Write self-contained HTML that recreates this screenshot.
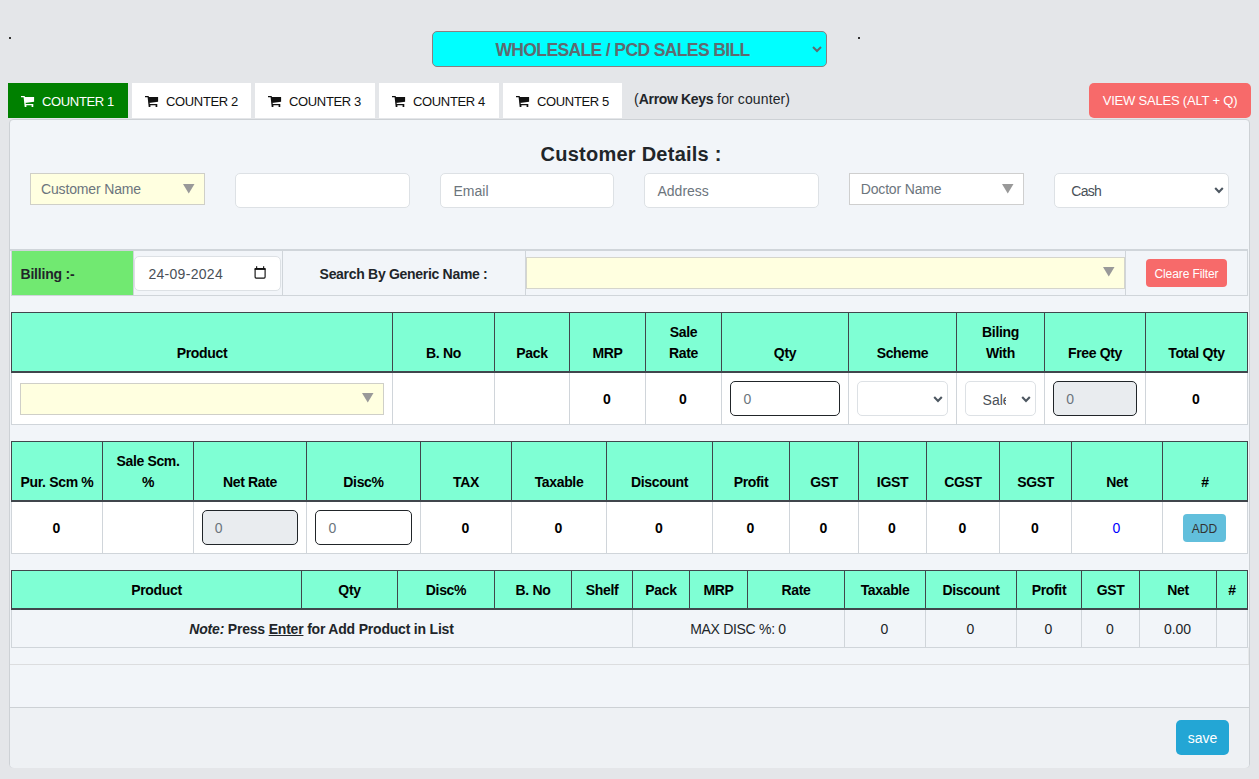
<!DOCTYPE html>
<html><head><meta charset="utf-8"><style>
html,body{margin:0;padding:0;}
body{width:1259px;height:779px;overflow:hidden;position:relative;background:#e4e6e9;font-family:"Liberation Sans", sans-serif;}
</style></head><body>
<div style="position:absolute;left:9px;top:37px;width:2px;height:2px;background:#333;"></div>
<div style="position:absolute;left:858px;top:37px;width:2px;height:2px;background:#333;"></div>
<div style="position:absolute;left:432px;top:31px;width:395px;height:36px;background:#00ffff;border:1px solid #8a7f80;border-radius:5px;box-sizing:border-box;"></div>
<div style="position:absolute;top:39.94px;height:20px;line-height:20px;font-size:17.5px;font-weight:bold;color:#5f6a70;white-space:nowrap;letter-spacing:-0.62px;left:432px;width:381px;text-align:center;">WHOLESALE / PCD SALES BILL</div>
<svg style="position:absolute;left:812px;top:46px;" width="10" height="7" viewBox="0 0 10 7"><path d="M1 1 L5 5 L9 1" fill="none" stroke="#5f6a70" stroke-width="2"/></svg>
<div style="position:absolute;left:8px;top:83px;width:120px;height:35px;background:#008000;"></div>
<svg style="position:absolute;left:20.7px;top:96px;" width="14" height="12" viewBox="0 0 14 12"><path d="M0 0 H3.3 V1.3 H0 Z M2.5 0.2 H3.9 L5.1 11 H3.7 Z M3.2 1 H13.1 V5.8 L3.9 6.9 Z M3.9 8.1 H12.3 V9.2 H3.9 Z M3.8 8.1 H5.4 V11 H3.8 Z M10.6 8.1 H12.3 V11 H10.6 Z" fill="#ffffff"/></svg>
<div style="position:absolute;top:91.50px;height:20px;line-height:20px;font-size:13px;font-weight:normal;color:#ffffff;white-space:nowrap;letter-spacing:-0.35px;left:42px;">COUNTER 1</div>
<div style="position:absolute;left:132px;top:83px;width:119px;height:35px;background:#ffffff;"></div>
<svg style="position:absolute;left:144.7px;top:96px;" width="14" height="12" viewBox="0 0 14 12"><path d="M0 0 H3.3 V1.3 H0 Z M2.5 0.2 H3.9 L5.1 11 H3.7 Z M3.2 1 H13.1 V5.8 L3.9 6.9 Z M3.9 8.1 H12.3 V9.2 H3.9 Z M3.8 8.1 H5.4 V11 H3.8 Z M10.6 8.1 H12.3 V11 H10.6 Z" fill="#111111"/></svg>
<div style="position:absolute;top:91.50px;height:20px;line-height:20px;font-size:13px;font-weight:normal;color:#111111;white-space:nowrap;letter-spacing:-0.35px;left:166px;">COUNTER 2</div>
<div style="position:absolute;left:255px;top:83px;width:120px;height:35px;background:#ffffff;"></div>
<svg style="position:absolute;left:267.7px;top:96px;" width="14" height="12" viewBox="0 0 14 12"><path d="M0 0 H3.3 V1.3 H0 Z M2.5 0.2 H3.9 L5.1 11 H3.7 Z M3.2 1 H13.1 V5.8 L3.9 6.9 Z M3.9 8.1 H12.3 V9.2 H3.9 Z M3.8 8.1 H5.4 V11 H3.8 Z M10.6 8.1 H12.3 V11 H10.6 Z" fill="#111111"/></svg>
<div style="position:absolute;top:91.50px;height:20px;line-height:20px;font-size:13px;font-weight:normal;color:#111111;white-space:nowrap;letter-spacing:-0.35px;left:289px;">COUNTER 3</div>
<div style="position:absolute;left:379px;top:83px;width:120px;height:35px;background:#ffffff;"></div>
<svg style="position:absolute;left:391.7px;top:96px;" width="14" height="12" viewBox="0 0 14 12"><path d="M0 0 H3.3 V1.3 H0 Z M2.5 0.2 H3.9 L5.1 11 H3.7 Z M3.2 1 H13.1 V5.8 L3.9 6.9 Z M3.9 8.1 H12.3 V9.2 H3.9 Z M3.8 8.1 H5.4 V11 H3.8 Z M10.6 8.1 H12.3 V11 H10.6 Z" fill="#111111"/></svg>
<div style="position:absolute;top:91.50px;height:20px;line-height:20px;font-size:13px;font-weight:normal;color:#111111;white-space:nowrap;letter-spacing:-0.35px;left:413px;">COUNTER 4</div>
<div style="position:absolute;left:503px;top:83px;width:119px;height:35px;background:#ffffff;"></div>
<svg style="position:absolute;left:515.7px;top:96px;" width="14" height="12" viewBox="0 0 14 12"><path d="M0 0 H3.3 V1.3 H0 Z M2.5 0.2 H3.9 L5.1 11 H3.7 Z M3.2 1 H13.1 V5.8 L3.9 6.9 Z M3.9 8.1 H12.3 V9.2 H3.9 Z M3.8 8.1 H5.4 V11 H3.8 Z M10.6 8.1 H12.3 V11 H10.6 Z" fill="#111111"/></svg>
<div style="position:absolute;top:91.50px;height:20px;line-height:20px;font-size:13px;font-weight:normal;color:#111111;white-space:nowrap;letter-spacing:-0.35px;left:537px;">COUNTER 5</div>
<div style="position:absolute;top:89.05px;height:20px;line-height:20px;font-size:14px;font-weight:normal;color:#212529;white-space:nowrap;letter-spacing:0.12px;left:634px;">(<b style="letter-spacing:-0.35px">Arrow Keys</b> for counter)</div>
<div style="position:absolute;left:1089px;top:83px;width:162px;height:35px;background:#f76a6a;border-radius:5px;"></div>
<div style="position:absolute;top:91.10px;height:20px;line-height:20px;font-size:13px;font-weight:normal;color:#ffffff;white-space:nowrap;letter-spacing:-0.2px;left:1089px;width:162px;text-align:center;">VIEW SALES (ALT + Q)</div>
<div style="position:absolute;left:9px;top:119px;width:1241px;height:649px;background:#f2f5f9;border:1px solid #cdd1d5;border-radius:4px;box-sizing:border-box;"></div>
<div style="position:absolute;left:10px;top:707px;width:1239px;height:60px;background:#eef1f4;border-top:1px solid #cdd1d5;border-radius:0 0 4px 4px;"></div>
<div style="position:absolute;top:143.77px;height:20px;line-height:20px;font-size:20px;font-weight:bold;color:#212529;white-space:nowrap;letter-spacing:0.25px;left:540.5px;">Customer Details :</div>
<div style="position:absolute;left:30px;top:173px;width:175px;height:32px;background:#ffffe0;border:1px solid #cfcfc8;box-sizing:border-box;"></div>
<div style="position:absolute;top:179.45px;height:20px;line-height:20px;font-size:14px;font-weight:normal;color:#6c757d;white-space:nowrap;letter-spacing:-0.15px;left:41px;">Customer Name</div>
<svg style="position:absolute;left:183px;top:184px;" width="12" height="10" viewBox="0 0 12 10"><path d="M0 0 H11.5 L5.75 9.6 Z" fill="#999"/></svg>
<div style="position:absolute;left:235px;top:173px;width:175px;height:35px;background:#fff;border:1px solid #dde1e5;border-radius:5px;box-sizing:border-box;"></div>
<div style="position:absolute;left:440px;top:173px;width:174px;height:35px;background:#fff;border:1px solid #dde1e5;border-radius:5px;box-sizing:border-box;"></div>
<div style="position:absolute;top:181.15px;height:20px;line-height:20px;font-size:14px;font-weight:normal;color:#6c757d;white-space:nowrap;left:453.5px;">Email</div>
<div style="position:absolute;left:644px;top:173px;width:175px;height:35px;background:#fff;border:1px solid #dde1e5;border-radius:5px;box-sizing:border-box;"></div>
<div style="position:absolute;top:181.15px;height:20px;line-height:20px;font-size:14px;font-weight:normal;color:#6c757d;white-space:nowrap;left:657.5px;">Address</div>
<div style="position:absolute;left:849px;top:173px;width:175px;height:32px;background:#fff;border:1px solid #cfcfcf;box-sizing:border-box;"></div>
<div style="position:absolute;top:179.15px;height:20px;line-height:20px;font-size:14px;font-weight:normal;color:#6c757d;white-space:nowrap;letter-spacing:-0.15px;left:860.7px;">Doctor Name</div>
<svg style="position:absolute;left:1002px;top:184px;" width="12" height="10" viewBox="0 0 12 10"><path d="M0 0 H11.5 L5.75 9.6 Z" fill="#999"/></svg>
<div style="position:absolute;left:1054px;top:173px;width:175px;height:35px;background:#fff;border:1px solid #dde1e5;border-radius:5px;box-sizing:border-box;"></div>
<div style="position:absolute;top:181.15px;height:20px;line-height:20px;font-size:14px;font-weight:normal;color:#495057;white-space:nowrap;letter-spacing:-0.7px;left:1071.3px;">Cash</div>
<svg style="position:absolute;left:1214px;top:186px;" width="10" height="8" viewBox="0 0 10 8"><path d="M1.2 2 L5 5.9 L8.8 2" fill="none" stroke="#4d5761" stroke-width="2.1"/></svg>
<div style="position:absolute;left:10px;top:249px;width:1238px;height:2px;background:#d0d5da;"></div>
<div style="position:absolute;left:11px;top:250px;width:1237px;height:46px;border-top:1px solid #d0d5da;border-bottom:1px solid #d0d5da;box-sizing:border-box;"></div>
<div style="position:absolute;left:11px;top:250px;width:1px;height:46px;background:#d0d5da;"></div>
<div style="position:absolute;left:133px;top:250px;width:1px;height:46px;background:#d0d5da;"></div>
<div style="position:absolute;left:282px;top:250px;width:1px;height:46px;background:#d0d5da;"></div>
<div style="position:absolute;left:525px;top:250px;width:1px;height:46px;background:#d0d5da;"></div>
<div style="position:absolute;left:1125px;top:250px;width:1px;height:46px;background:#d0d5da;"></div>
<div style="position:absolute;left:1247px;top:250px;width:1px;height:46px;background:#d0d5da;"></div>
<div style="position:absolute;left:12px;top:251px;width:121px;height:44px;background:#71e971;"></div>
<div style="position:absolute;top:264.15px;height:20px;line-height:20px;font-size:14px;font-weight:bold;color:#212529;white-space:nowrap;letter-spacing:-0.2px;left:20.5px;">Billing :-</div>
<div style="position:absolute;left:134px;top:256px;width:147px;height:35px;background:#fff;border:1px solid #dde1e5;border-radius:5px;box-sizing:border-box;"></div>
<div style="position:absolute;top:263.95px;height:20px;line-height:20px;font-size:14px;font-weight:normal;color:#495057;white-space:nowrap;letter-spacing:0.3px;left:148.4px;">24-09-2024</div>
<svg style="position:absolute;left:254px;top:266px;" width="12" height="13" viewBox="0 0 12 13"><rect x="1.1" y="2.6" width="10" height="9.5" rx="1" fill="none" stroke="#111" stroke-width="1.15"/><rect x="0.6" y="2.1" width="11" height="1.8" fill="#111"/><rect x="2.1" y="0.2" width="1.1" height="2.5" fill="#111"/><rect x="9.1" y="0.2" width="1.1" height="2.5" fill="#111"/></svg>
<div style="position:absolute;top:264.15px;height:20px;line-height:20px;font-size:14px;font-weight:bold;color:#212529;white-space:nowrap;letter-spacing:-0.3px;left:319.6px;">Search By Generic Name :</div>
<div style="position:absolute;left:526px;top:257px;width:599px;height:32px;background:#ffffe0;border:1px solid #d5d5cc;box-sizing:border-box;"></div>
<svg style="position:absolute;left:1103px;top:267px;" width="12" height="10" viewBox="0 0 12 10"><path d="M0 0 H11.5 L5.75 9.6 Z" fill="#999"/></svg>
<div style="position:absolute;left:1146px;top:259px;width:81px;height:28px;background:#f76a6a;border-radius:4px;"></div>
<div style="position:absolute;top:263.84px;height:20px;line-height:20px;font-size:12px;font-weight:normal;color:#ffffff;white-space:nowrap;letter-spacing:-0.1px;left:1146px;width:81px;text-align:center;">Cleare Filter</div>
<div style="position:absolute;left:11px;top:312px;width:1237px;height:59px;background:#7fffd4;"></div>
<div style="position:absolute;left:11px;top:373px;width:1237px;height:51px;background:#ffffff;"></div>
<div style="position:absolute;left:11px;top:312px;width:1237px;height:1px;background:#40464c;"></div>
<div style="position:absolute;left:11px;top:312px;width:1px;height:59px;background:#40464c;"></div>
<div style="position:absolute;left:392px;top:312px;width:1px;height:59px;background:#40464c;"></div>
<div style="position:absolute;left:494px;top:312px;width:1px;height:59px;background:#40464c;"></div>
<div style="position:absolute;left:569px;top:312px;width:1px;height:59px;background:#40464c;"></div>
<div style="position:absolute;left:645px;top:312px;width:1px;height:59px;background:#40464c;"></div>
<div style="position:absolute;left:721px;top:312px;width:1px;height:59px;background:#40464c;"></div>
<div style="position:absolute;left:848px;top:312px;width:1px;height:59px;background:#40464c;"></div>
<div style="position:absolute;left:956px;top:312px;width:1px;height:59px;background:#40464c;"></div>
<div style="position:absolute;left:1044px;top:312px;width:1px;height:59px;background:#40464c;"></div>
<div style="position:absolute;left:1145px;top:312px;width:1px;height:59px;background:#40464c;"></div>
<div style="position:absolute;left:1247px;top:312px;width:1px;height:59px;background:#40464c;"></div>
<div style="position:absolute;left:11px;top:371px;width:1237px;height:2px;background:#40464c;"></div>
<div style="position:absolute;left:11px;top:424px;width:1237px;height:1px;background:#d0d5da;"></div>
<div style="position:absolute;left:11px;top:373px;width:1px;height:51px;background:#d0d5da;"></div>
<div style="position:absolute;left:392px;top:373px;width:1px;height:51px;background:#d0d5da;"></div>
<div style="position:absolute;left:494px;top:373px;width:1px;height:51px;background:#d0d5da;"></div>
<div style="position:absolute;left:569px;top:373px;width:1px;height:51px;background:#d0d5da;"></div>
<div style="position:absolute;left:645px;top:373px;width:1px;height:51px;background:#d0d5da;"></div>
<div style="position:absolute;left:721px;top:373px;width:1px;height:51px;background:#d0d5da;"></div>
<div style="position:absolute;left:848px;top:373px;width:1px;height:51px;background:#d0d5da;"></div>
<div style="position:absolute;left:956px;top:373px;width:1px;height:51px;background:#d0d5da;"></div>
<div style="position:absolute;left:1044px;top:373px;width:1px;height:51px;background:#d0d5da;"></div>
<div style="position:absolute;left:1145px;top:373px;width:1px;height:51px;background:#d0d5da;"></div>
<div style="position:absolute;left:1247px;top:373px;width:1px;height:51px;background:#d0d5da;"></div>
<div style="position:absolute;top:343.45px;height:20px;line-height:20px;font-size:14px;font-weight:bold;color:#000000;white-space:nowrap;letter-spacing:-0.35px;left:12px;width:380px;text-align:center;">Product</div>
<div style="position:absolute;top:343.45px;height:20px;line-height:20px;font-size:14px;font-weight:bold;color:#000000;white-space:nowrap;letter-spacing:-0.35px;left:393px;width:101px;text-align:center;">B. No</div>
<div style="position:absolute;top:343.45px;height:20px;line-height:20px;font-size:14px;font-weight:bold;color:#000000;white-space:nowrap;letter-spacing:-0.35px;left:495px;width:74px;text-align:center;">Pack</div>
<div style="position:absolute;top:343.45px;height:20px;line-height:20px;font-size:14px;font-weight:bold;color:#000000;white-space:nowrap;letter-spacing:-0.35px;left:570px;width:75px;text-align:center;">MRP</div>
<div style="position:absolute;top:322.45px;height:20px;line-height:20px;font-size:14px;font-weight:bold;color:#000000;white-space:nowrap;letter-spacing:-0.35px;left:646px;width:75px;text-align:center;">Sale</div>
<div style="position:absolute;top:343.45px;height:20px;line-height:20px;font-size:14px;font-weight:bold;color:#000000;white-space:nowrap;letter-spacing:-0.35px;left:646px;width:75px;text-align:center;">Rate</div>
<div style="position:absolute;top:343.45px;height:20px;line-height:20px;font-size:14px;font-weight:bold;color:#000000;white-space:nowrap;letter-spacing:-0.35px;left:722px;width:126px;text-align:center;">Qty</div>
<div style="position:absolute;top:343.45px;height:20px;line-height:20px;font-size:14px;font-weight:bold;color:#000000;white-space:nowrap;letter-spacing:-0.35px;left:849px;width:107px;text-align:center;">Scheme</div>
<div style="position:absolute;top:322.45px;height:20px;line-height:20px;font-size:14px;font-weight:bold;color:#000000;white-space:nowrap;letter-spacing:-0.35px;left:957px;width:87px;text-align:center;">Biling</div>
<div style="position:absolute;top:343.45px;height:20px;line-height:20px;font-size:14px;font-weight:bold;color:#000000;white-space:nowrap;letter-spacing:-0.35px;left:957px;width:87px;text-align:center;">With</div>
<div style="position:absolute;top:343.45px;height:20px;line-height:20px;font-size:14px;font-weight:bold;color:#000000;white-space:nowrap;letter-spacing:-0.35px;left:1045px;width:100px;text-align:center;">Free Qty</div>
<div style="position:absolute;top:343.45px;height:20px;line-height:20px;font-size:14px;font-weight:bold;color:#000000;white-space:nowrap;letter-spacing:-0.35px;left:1146px;width:101px;text-align:center;">Total Qty</div>
<div style="position:absolute;left:20px;top:383px;width:364px;height:32px;background:#ffffe0;border:1px solid #cfcfc8;box-sizing:border-box;"></div>
<svg style="position:absolute;left:362px;top:393px;" width="12" height="10" viewBox="0 0 12 10"><path d="M0 0 H11.5 L5.75 9.6 Z" fill="#999"/></svg>
<div style="position:absolute;top:389.15px;height:20px;line-height:20px;font-size:14px;font-weight:bold;color:#000;white-space:nowrap;left:569px;width:76px;text-align:center;">0</div>
<div style="position:absolute;top:389.15px;height:20px;line-height:20px;font-size:14px;font-weight:bold;color:#000;white-space:nowrap;left:645px;width:76px;text-align:center;">0</div>
<div style="position:absolute;left:730px;top:381px;width:110px;height:35px;background:#fff;border:1.5px solid #212529;border-radius:5px;box-sizing:border-box;"></div>
<div style="position:absolute;top:388.95px;height:20px;line-height:20px;font-size:14px;font-weight:normal;color:#6c757d;white-space:nowrap;left:743.5px;">0</div>
<div style="position:absolute;left:857px;top:381px;width:91px;height:35px;background:#fff;border:1px solid #dde1e5;border-radius:5px;box-sizing:border-box;"></div>
<svg style="position:absolute;left:932.5px;top:395px;" width="10" height="8" viewBox="0 0 10 8"><path d="M1.2 2 L5 5.9 L8.8 2" fill="none" stroke="#4d5761" stroke-width="2.1"/></svg>
<div style="position:absolute;left:965px;top:381px;width:71px;height:35px;background:#fff;border:1px solid #dde1e5;border-radius:5px;box-sizing:border-box;"></div>
<div style="position:absolute;top:389.55px;height:20px;line-height:20px;font-size:14px;font-weight:normal;color:#495057;white-space:nowrap;left:982.6px;"><span style="display:inline-block;width:23px;overflow:hidden;vertical-align:top">Sale</span></div>
<svg style="position:absolute;left:1021px;top:395px;" width="10" height="8" viewBox="0 0 10 8"><path d="M1.2 2 L5 5.9 L8.8 2" fill="none" stroke="#4d5761" stroke-width="2.1"/></svg>
<div style="position:absolute;left:1053px;top:381px;width:84px;height:35px;background:#e9ecef;border:1.5px solid #212529;border-radius:5px;box-sizing:border-box;"></div>
<div style="position:absolute;top:388.95px;height:20px;line-height:20px;font-size:14px;font-weight:normal;color:#6c757d;white-space:nowrap;left:1066.3px;">0</div>
<div style="position:absolute;top:389.15px;height:20px;line-height:20px;font-size:14px;font-weight:bold;color:#000;white-space:nowrap;left:1145px;width:102px;text-align:center;">0</div>
<div style="position:absolute;left:11px;top:441px;width:1237px;height:59px;background:#7fffd4;"></div>
<div style="position:absolute;left:11px;top:502px;width:1237px;height:51px;background:#ffffff;"></div>
<div style="position:absolute;left:11px;top:441px;width:1237px;height:1px;background:#40464c;"></div>
<div style="position:absolute;left:11px;top:441px;width:1px;height:59px;background:#40464c;"></div>
<div style="position:absolute;left:102px;top:441px;width:1px;height:59px;background:#40464c;"></div>
<div style="position:absolute;left:193px;top:441px;width:1px;height:59px;background:#40464c;"></div>
<div style="position:absolute;left:306px;top:441px;width:1px;height:59px;background:#40464c;"></div>
<div style="position:absolute;left:420px;top:441px;width:1px;height:59px;background:#40464c;"></div>
<div style="position:absolute;left:511px;top:441px;width:1px;height:59px;background:#40464c;"></div>
<div style="position:absolute;left:606px;top:441px;width:1px;height:59px;background:#40464c;"></div>
<div style="position:absolute;left:712px;top:441px;width:1px;height:59px;background:#40464c;"></div>
<div style="position:absolute;left:789px;top:441px;width:1px;height:59px;background:#40464c;"></div>
<div style="position:absolute;left:858px;top:441px;width:1px;height:59px;background:#40464c;"></div>
<div style="position:absolute;left:926px;top:441px;width:1px;height:59px;background:#40464c;"></div>
<div style="position:absolute;left:999px;top:441px;width:1px;height:59px;background:#40464c;"></div>
<div style="position:absolute;left:1071px;top:441px;width:1px;height:59px;background:#40464c;"></div>
<div style="position:absolute;left:1162px;top:441px;width:1px;height:59px;background:#40464c;"></div>
<div style="position:absolute;left:1247px;top:441px;width:1px;height:59px;background:#40464c;"></div>
<div style="position:absolute;left:11px;top:500px;width:1237px;height:2px;background:#40464c;"></div>
<div style="position:absolute;left:11px;top:553px;width:1237px;height:1px;background:#d0d5da;"></div>
<div style="position:absolute;left:11px;top:502px;width:1px;height:51px;background:#d0d5da;"></div>
<div style="position:absolute;left:102px;top:502px;width:1px;height:51px;background:#d0d5da;"></div>
<div style="position:absolute;left:193px;top:502px;width:1px;height:51px;background:#d0d5da;"></div>
<div style="position:absolute;left:306px;top:502px;width:1px;height:51px;background:#d0d5da;"></div>
<div style="position:absolute;left:420px;top:502px;width:1px;height:51px;background:#d0d5da;"></div>
<div style="position:absolute;left:511px;top:502px;width:1px;height:51px;background:#d0d5da;"></div>
<div style="position:absolute;left:606px;top:502px;width:1px;height:51px;background:#d0d5da;"></div>
<div style="position:absolute;left:712px;top:502px;width:1px;height:51px;background:#d0d5da;"></div>
<div style="position:absolute;left:789px;top:502px;width:1px;height:51px;background:#d0d5da;"></div>
<div style="position:absolute;left:858px;top:502px;width:1px;height:51px;background:#d0d5da;"></div>
<div style="position:absolute;left:926px;top:502px;width:1px;height:51px;background:#d0d5da;"></div>
<div style="position:absolute;left:999px;top:502px;width:1px;height:51px;background:#d0d5da;"></div>
<div style="position:absolute;left:1071px;top:502px;width:1px;height:51px;background:#d0d5da;"></div>
<div style="position:absolute;left:1162px;top:502px;width:1px;height:51px;background:#d0d5da;"></div>
<div style="position:absolute;left:1247px;top:502px;width:1px;height:51px;background:#d0d5da;"></div>
<div style="position:absolute;top:471.65px;height:20px;line-height:20px;font-size:14px;font-weight:bold;color:#000000;white-space:nowrap;letter-spacing:-0.35px;left:12px;width:90px;text-align:center;">Pur. Scm %</div>
<div style="position:absolute;top:450.65px;height:20px;line-height:20px;font-size:14px;font-weight:bold;color:#000000;white-space:nowrap;letter-spacing:-0.35px;left:103px;width:90px;text-align:center;">Sale Scm.</div>
<div style="position:absolute;top:471.65px;height:20px;line-height:20px;font-size:14px;font-weight:bold;color:#000000;white-space:nowrap;letter-spacing:-0.35px;left:103px;width:90px;text-align:center;">%</div>
<div style="position:absolute;top:471.65px;height:20px;line-height:20px;font-size:14px;font-weight:bold;color:#000000;white-space:nowrap;letter-spacing:-0.35px;left:194px;width:112px;text-align:center;">Net Rate</div>
<div style="position:absolute;top:471.65px;height:20px;line-height:20px;font-size:14px;font-weight:bold;color:#000000;white-space:nowrap;letter-spacing:-0.35px;left:307px;width:113px;text-align:center;">Disc%</div>
<div style="position:absolute;top:471.65px;height:20px;line-height:20px;font-size:14px;font-weight:bold;color:#000000;white-space:nowrap;letter-spacing:-0.35px;left:421px;width:90px;text-align:center;">TAX</div>
<div style="position:absolute;top:471.65px;height:20px;line-height:20px;font-size:14px;font-weight:bold;color:#000000;white-space:nowrap;letter-spacing:-0.35px;left:512px;width:94px;text-align:center;">Taxable</div>
<div style="position:absolute;top:471.65px;height:20px;line-height:20px;font-size:14px;font-weight:bold;color:#000000;white-space:nowrap;letter-spacing:-0.35px;left:607px;width:105px;text-align:center;">Discount</div>
<div style="position:absolute;top:471.65px;height:20px;line-height:20px;font-size:14px;font-weight:bold;color:#000000;white-space:nowrap;letter-spacing:-0.35px;left:713px;width:76px;text-align:center;">Profit</div>
<div style="position:absolute;top:471.65px;height:20px;line-height:20px;font-size:14px;font-weight:bold;color:#000000;white-space:nowrap;letter-spacing:-0.35px;left:790px;width:68px;text-align:center;">GST</div>
<div style="position:absolute;top:471.65px;height:20px;line-height:20px;font-size:14px;font-weight:bold;color:#000000;white-space:nowrap;letter-spacing:-0.35px;left:859px;width:67px;text-align:center;">IGST</div>
<div style="position:absolute;top:471.65px;height:20px;line-height:20px;font-size:14px;font-weight:bold;color:#000000;white-space:nowrap;letter-spacing:-0.35px;left:927px;width:72px;text-align:center;">CGST</div>
<div style="position:absolute;top:471.65px;height:20px;line-height:20px;font-size:14px;font-weight:bold;color:#000000;white-space:nowrap;letter-spacing:-0.35px;left:1000px;width:71px;text-align:center;">SGST</div>
<div style="position:absolute;top:471.65px;height:20px;line-height:20px;font-size:14px;font-weight:bold;color:#000000;white-space:nowrap;letter-spacing:-0.35px;left:1072px;width:90px;text-align:center;">Net</div>
<div style="position:absolute;top:471.65px;height:20px;line-height:20px;font-size:14px;font-weight:bold;color:#000000;white-space:nowrap;letter-spacing:-0.35px;left:1163px;width:84px;text-align:center;">#</div>
<div style="position:absolute;top:517.95px;height:20px;line-height:20px;font-size:14px;font-weight:bold;color:#000;white-space:nowrap;left:11px;width:91px;text-align:center;">0</div>
<div style="position:absolute;left:202px;top:510px;width:96px;height:35px;background:#e9ecef;border:1.5px solid #212529;border-radius:5px;box-sizing:border-box;"></div>
<div style="position:absolute;top:517.85px;height:20px;line-height:20px;font-size:14px;font-weight:normal;color:#6c757d;white-space:nowrap;left:214.8px;">0</div>
<div style="position:absolute;left:315px;top:510px;width:97px;height:35px;background:#fff;border:1.5px solid #212529;border-radius:5px;box-sizing:border-box;"></div>
<div style="position:absolute;top:517.85px;height:20px;line-height:20px;font-size:14px;font-weight:normal;color:#6c757d;white-space:nowrap;left:328.6px;">0</div>
<div style="position:absolute;top:517.95px;height:20px;line-height:20px;font-size:14px;font-weight:bold;color:#000;white-space:nowrap;left:420px;width:91px;text-align:center;">0</div>
<div style="position:absolute;top:517.95px;height:20px;line-height:20px;font-size:14px;font-weight:bold;color:#000;white-space:nowrap;left:511px;width:95px;text-align:center;">0</div>
<div style="position:absolute;top:517.95px;height:20px;line-height:20px;font-size:14px;font-weight:bold;color:#000;white-space:nowrap;left:606px;width:106px;text-align:center;">0</div>
<div style="position:absolute;top:517.95px;height:20px;line-height:20px;font-size:14px;font-weight:bold;color:#000;white-space:nowrap;left:712px;width:77px;text-align:center;">0</div>
<div style="position:absolute;top:517.95px;height:20px;line-height:20px;font-size:14px;font-weight:bold;color:#000;white-space:nowrap;left:789px;width:69px;text-align:center;">0</div>
<div style="position:absolute;top:517.95px;height:20px;line-height:20px;font-size:14px;font-weight:bold;color:#000;white-space:nowrap;left:858px;width:68px;text-align:center;">0</div>
<div style="position:absolute;top:517.95px;height:20px;line-height:20px;font-size:14px;font-weight:bold;color:#000;white-space:nowrap;left:926px;width:73px;text-align:center;">0</div>
<div style="position:absolute;top:517.95px;height:20px;line-height:20px;font-size:14px;font-weight:bold;color:#000;white-space:nowrap;left:999px;width:72px;text-align:center;">0</div>
<div style="position:absolute;top:517.95px;height:20px;line-height:20px;font-size:14px;font-weight:normal;color:#0000ff;white-space:nowrap;left:1071px;width:91px;text-align:center;">0</div>
<div style="position:absolute;left:1183px;top:514px;width:43px;height:28px;background:#62bfdc;border-radius:4px;"></div>
<div style="position:absolute;top:518.84px;height:20px;line-height:20px;font-size:12px;font-weight:normal;color:#333;white-space:nowrap;left:1183px;width:43px;text-align:center;">ADD</div>
<div style="position:absolute;left:11px;top:570px;width:1237px;height:38px;background:#7fffd4;"></div>
<div style="position:absolute;left:11px;top:610px;width:1237px;height:37px;background:#f2f5f9;"></div>
<div style="position:absolute;left:11px;top:570px;width:1237px;height:1px;background:#40464c;"></div>
<div style="position:absolute;left:11px;top:570px;width:1px;height:38px;background:#40464c;"></div>
<div style="position:absolute;left:301px;top:570px;width:1px;height:38px;background:#40464c;"></div>
<div style="position:absolute;left:397px;top:570px;width:1px;height:38px;background:#40464c;"></div>
<div style="position:absolute;left:494px;top:570px;width:1px;height:38px;background:#40464c;"></div>
<div style="position:absolute;left:571px;top:570px;width:1px;height:38px;background:#40464c;"></div>
<div style="position:absolute;left:632px;top:570px;width:1px;height:38px;background:#40464c;"></div>
<div style="position:absolute;left:689px;top:570px;width:1px;height:38px;background:#40464c;"></div>
<div style="position:absolute;left:747px;top:570px;width:1px;height:38px;background:#40464c;"></div>
<div style="position:absolute;left:844px;top:570px;width:1px;height:38px;background:#40464c;"></div>
<div style="position:absolute;left:925px;top:570px;width:1px;height:38px;background:#40464c;"></div>
<div style="position:absolute;left:1016px;top:570px;width:1px;height:38px;background:#40464c;"></div>
<div style="position:absolute;left:1081px;top:570px;width:1px;height:38px;background:#40464c;"></div>
<div style="position:absolute;left:1139px;top:570px;width:1px;height:38px;background:#40464c;"></div>
<div style="position:absolute;left:1216px;top:570px;width:1px;height:38px;background:#40464c;"></div>
<div style="position:absolute;left:1247px;top:570px;width:1px;height:38px;background:#40464c;"></div>
<div style="position:absolute;left:11px;top:608px;width:1237px;height:2px;background:#40464c;"></div>
<div style="position:absolute;left:11px;top:647px;width:1237px;height:1px;background:#d0d5da;"></div>
<div style="position:absolute;left:11px;top:610px;width:1px;height:37px;background:#d0d5da;"></div>
<div style="position:absolute;left:632px;top:610px;width:1px;height:37px;background:#d0d5da;"></div>
<div style="position:absolute;left:844px;top:610px;width:1px;height:37px;background:#d0d5da;"></div>
<div style="position:absolute;left:925px;top:610px;width:1px;height:37px;background:#d0d5da;"></div>
<div style="position:absolute;left:1016px;top:610px;width:1px;height:37px;background:#d0d5da;"></div>
<div style="position:absolute;left:1081px;top:610px;width:1px;height:37px;background:#d0d5da;"></div>
<div style="position:absolute;left:1139px;top:610px;width:1px;height:37px;background:#d0d5da;"></div>
<div style="position:absolute;left:1216px;top:610px;width:1px;height:37px;background:#d0d5da;"></div>
<div style="position:absolute;left:1247px;top:610px;width:1px;height:37px;background:#d0d5da;"></div>
<div style="position:absolute;top:580.15px;height:20px;line-height:20px;font-size:14px;font-weight:bold;color:#000000;white-space:nowrap;letter-spacing:-0.35px;left:12px;width:289px;text-align:center;">Product</div>
<div style="position:absolute;top:580.15px;height:20px;line-height:20px;font-size:14px;font-weight:bold;color:#000000;white-space:nowrap;letter-spacing:-0.35px;left:302px;width:95px;text-align:center;">Qty</div>
<div style="position:absolute;top:580.15px;height:20px;line-height:20px;font-size:14px;font-weight:bold;color:#000000;white-space:nowrap;letter-spacing:-0.35px;left:398px;width:96px;text-align:center;">Disc%</div>
<div style="position:absolute;top:580.15px;height:20px;line-height:20px;font-size:14px;font-weight:bold;color:#000000;white-space:nowrap;letter-spacing:-0.35px;left:495px;width:76px;text-align:center;">B. No</div>
<div style="position:absolute;top:580.15px;height:20px;line-height:20px;font-size:14px;font-weight:bold;color:#000000;white-space:nowrap;letter-spacing:-0.35px;left:572px;width:60px;text-align:center;">Shelf</div>
<div style="position:absolute;top:580.15px;height:20px;line-height:20px;font-size:14px;font-weight:bold;color:#000000;white-space:nowrap;letter-spacing:-0.35px;left:633px;width:56px;text-align:center;">Pack</div>
<div style="position:absolute;top:580.15px;height:20px;line-height:20px;font-size:14px;font-weight:bold;color:#000000;white-space:nowrap;letter-spacing:-0.35px;left:690px;width:57px;text-align:center;">MRP</div>
<div style="position:absolute;top:580.15px;height:20px;line-height:20px;font-size:14px;font-weight:bold;color:#000000;white-space:nowrap;letter-spacing:-0.35px;left:748px;width:96px;text-align:center;">Rate</div>
<div style="position:absolute;top:580.15px;height:20px;line-height:20px;font-size:14px;font-weight:bold;color:#000000;white-space:nowrap;letter-spacing:-0.35px;left:845px;width:80px;text-align:center;">Taxable</div>
<div style="position:absolute;top:580.15px;height:20px;line-height:20px;font-size:14px;font-weight:bold;color:#000000;white-space:nowrap;letter-spacing:-0.35px;left:926px;width:90px;text-align:center;">Discount</div>
<div style="position:absolute;top:580.15px;height:20px;line-height:20px;font-size:14px;font-weight:bold;color:#000000;white-space:nowrap;letter-spacing:-0.35px;left:1017px;width:64px;text-align:center;">Profit</div>
<div style="position:absolute;top:580.15px;height:20px;line-height:20px;font-size:14px;font-weight:bold;color:#000000;white-space:nowrap;letter-spacing:-0.35px;left:1082px;width:57px;text-align:center;">GST</div>
<div style="position:absolute;top:580.15px;height:20px;line-height:20px;font-size:14px;font-weight:bold;color:#000000;white-space:nowrap;letter-spacing:-0.35px;left:1140px;width:76px;text-align:center;">Net</div>
<div style="position:absolute;top:580.15px;height:20px;line-height:20px;font-size:14px;font-weight:bold;color:#000000;white-space:nowrap;letter-spacing:-0.35px;left:1217px;width:30px;text-align:center;">#</div>
<div style="position:absolute;top:619.15px;height:20px;line-height:20px;font-size:14px;font-weight:bold;color:#212529;white-space:nowrap;letter-spacing:-0.2px;left:11px;width:621px;text-align:center;"><i>Note:</i> Press <u>Enter</u> for Add Product in List</div>
<div style="position:absolute;top:619.15px;height:20px;line-height:20px;font-size:14px;font-weight:normal;color:#212529;white-space:nowrap;letter-spacing:-0.3px;left:632px;width:212px;text-align:center;">MAX DISC %: 0</div>
<div style="position:absolute;top:619.35px;height:20px;line-height:20px;font-size:14px;font-weight:normal;color:#212529;white-space:nowrap;left:844px;width:81px;text-align:center;">0</div>
<div style="position:absolute;top:619.35px;height:20px;line-height:20px;font-size:14px;font-weight:normal;color:#212529;white-space:nowrap;left:925px;width:91px;text-align:center;">0</div>
<div style="position:absolute;top:619.35px;height:20px;line-height:20px;font-size:14px;font-weight:normal;color:#212529;white-space:nowrap;left:1016px;width:65px;text-align:center;">0</div>
<div style="position:absolute;top:619.35px;height:20px;line-height:20px;font-size:14px;font-weight:normal;color:#212529;white-space:nowrap;left:1081px;width:58px;text-align:center;">0</div>
<div style="position:absolute;top:619.35px;height:20px;line-height:20px;font-size:14px;font-weight:normal;color:#212529;white-space:nowrap;left:1139px;width:77px;text-align:center;">0.00</div>
<div style="position:absolute;left:10px;top:664px;width:1239px;height:1px;background:#dcdddf;"></div>
<div style="position:absolute;left:1248px;top:647px;width:1px;height:17px;background:#e6e8ea;"></div>
<div style="position:absolute;left:1176px;top:720px;width:53px;height:35px;background:#23a6d5;border-radius:5px;"></div>
<div style="position:absolute;top:728.15px;height:20px;line-height:20px;font-size:14px;font-weight:normal;color:#ffffff;white-space:nowrap;left:1176px;width:53px;text-align:center;">save</div>
</body></html>
